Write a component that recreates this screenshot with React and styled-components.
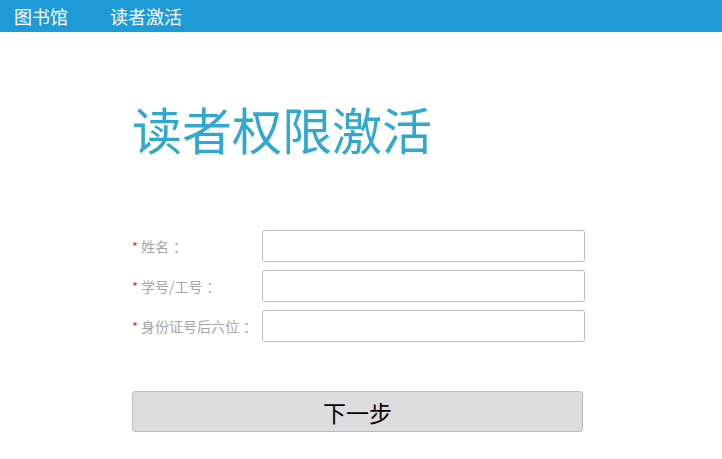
import React from "react";
import styled, { createGlobalStyle } from "styled-components";

const GlobalStyle = createGlobalStyle`
  html, body {
    margin: 0;
    padding: 0;
    background: #fff;
    font-family: "Liberation Sans", "Noto Sans CJK SC", sans-serif;
  }
`;

const TopBar = styled.div`
  height: 32px;
  background: #1e9bd7;
  display: flex;
  align-items: center;
  padding-left: 14px;
  gap: 42px;
`;

const NavItem = styled.a`
  color: #fff;
  font-size: 18px;
  line-height: 32px;
  text-decoration: none;
  font-family: "Noto Sans CJK SC", sans-serif;
`;

const Main = styled.div`
  padding-left: 132px;
  width: 453px;
`;

const Title = styled.h1`
  margin: 0;
  padding-top: 60px;
  height: 134px;
  font-size: 50px;
  line-height: 72px;
  font-weight: normal;
  color: #33a8cf;
  font-family: "Noto Sans CJK SC", sans-serif;
  box-sizing: border-box;
`;

const Form = styled.form`
  display: flex;
  flex-direction: column;
  gap: 8px;
  margin-top: 64px;
`;

const Row = styled.div`
  display: flex;
  align-items: center;
  height: 32px;
`;

const Label = styled.label`
  width: 130px;
  font-size: 14px;
  color: #a6a6a6;
  font-family: "Noto Sans CJK SC", sans-serif;
`;

const Star = styled.span`
  color: #e33;
  font-size: 13px;
  margin-right: 3px;
`;

const Colon = styled.span`
  margin-left: 4px;
`;

const Input = styled.input`
  width: 323px;
  height: 32px;
  box-sizing: border-box;
  border: 1px solid #bbb;
  border-radius: 3px;
  padding: 0 6px;
  outline: none;
`;

const NextButton = styled.button`
  margin-top: 49px;
  width: 451px;
  height: 41px;
  background: #dddddd;
  border: 1px solid #bcbcbc;
  border-radius: 3px;
  font-size: 23px;
  color: #000;
  font-family: "Noto Sans CJK SC", sans-serif;
  cursor: pointer;
`;

const fields = ["姓名", "学号/工号", "身份证号后六位"];

export default function App() {
  return (
    <>
      <GlobalStyle />
      <TopBar>
        <NavItem href="#">图书馆</NavItem>
        <NavItem href="#">读者激活</NavItem>
      </TopBar>
      <Main>
        <Title>读者权限激活</Title>
        <Form onSubmit={(e) => e.preventDefault()}>
          {fields.map((f) => (
            <Row key={f}>
              <Label>
                <Star>*</Star>
                {f}
                <Colon>：</Colon>
              </Label>
              <Input type="text" />
            </Row>
          ))}
        </Form>
        <NextButton type="button">下一步</NextButton>
      </Main>
    </>
  );
}
